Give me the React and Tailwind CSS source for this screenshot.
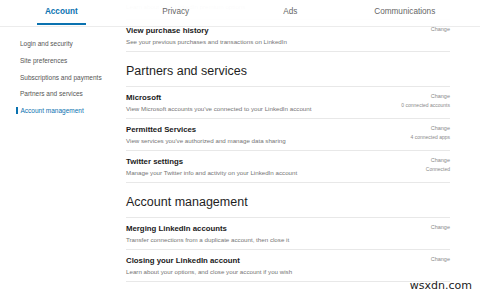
import React from "react";

const Row = ({ title, sub, status }) => (
  <div className="flex h-[32px] justify-between border-t border-[#e8e8e8]">
    <div className="pt-[6px]">
      <div className="text-[7.8px] font-bold leading-[10px] text-[#1a1a1a]">{title}</div>
      <div className="mt-[1px] text-[6.2px] leading-[9px] text-[#757575]">{sub}</div>
    </div>
    <div className="flex flex-col items-end pt-[5px]">
      <div className="text-[5.5px] leading-[8px] text-[#8a8a8a]">Change</div>
      {status && <div className="mt-[1px] text-[5px] leading-[8px] text-[#8a8a8a]">{status}</div>}
    </div>
  </div>
);

const Heading = ({ children }) => (
  <div className="border-t border-[#e8e8e8] pt-[12px] pb-[7px] text-[12.5px] leading-[15px] text-[#1e1e1e]">{children}</div>
);

export default function App() {
  const side = ["Login and security", "Site preferences", "Subscriptions and payments", "Partners and services"];
  return (
    <div className="relative h-[298px] w-[480px] overflow-hidden bg-white" style={{ fontFamily: '"Liberation Sans", Arial, sans-serif' }}>
      <div className="absolute left-0 top-0 z-10 h-[27px] w-[480px] border-b border-[#ececec] bg-white/95">
        <div className="ml-[4px] grid h-full w-[458px] grid-cols-4 text-[8.2px] leading-[12px]">
          <div className="relative flex items-start justify-center pt-[6px] font-bold text-[#0a72b0]">
            Account
            <div className="absolute bottom-[1px] left-[33px] h-[2px] w-[49px] bg-[#0a72b0]" />
          </div>
          <div className="flex justify-center pt-[6px] text-[#666]">Privacy</div>
          <div className="flex justify-center pt-[6px] text-[#666]">Ads</div>
          <div className="flex justify-center pt-[6px] text-[#666]">Communications</div>
        </div>
      </div>
      <div className="flex">
        <div className="w-[126px] pt-[39px]">
          {side.map((s) => (
            <div key={s} className="h-[16.8px] pl-[20px] text-[6.5px] leading-[9px] text-[#555]">{s}</div>
          ))}
          <div className="flex items-center pl-[16px] text-[6.5px] leading-[9px] text-[#0a72b0]">
            <span className="mr-[3px] h-[7px] w-[1.5px] bg-[#0a72b0]" />
            Account management
          </div>
        </div>
        <div className="w-[324px]">
          <div className="h-[19px] pt-[2px] text-[6.2px] leading-[9px] text-[#aaa]">Learn about your LinkedIn premium options</div>
          <Row title="View purchase history" sub="See your previous purchases and transactions on LinkedIn" />
          <Heading>Partners and services</Heading>
          <Row title="Microsoft" sub="View Microsoft accounts you've connected to your LinkedIn account" status="0 connected accounts" />
          <Row title="Permitted Services" sub="View services you've authorized and manage data sharing" status="4 connected apps" />
          <Row title="Twitter settings" sub="Manage your Twitter info and activity on your LinkedIn account" status="Connected" />
          <Heading>Account management</Heading>
          <Row title="Merging LinkedIn accounts" sub="Transfer connections from a duplicate account, then close it" />
          <Row title="Closing your LinkedIn account" sub="Learn about your options, and close your account if you wish" />
          <div className="border-t border-[#e8e8e8]" />
        </div>
      </div>
      <div className="absolute bottom-[4px] right-[8px] text-[11px] text-[#222]" style={{ fontFamily: '"DejaVu Sans", sans-serif' }}>wsxdn.com</div>
    </div>
  );
}
